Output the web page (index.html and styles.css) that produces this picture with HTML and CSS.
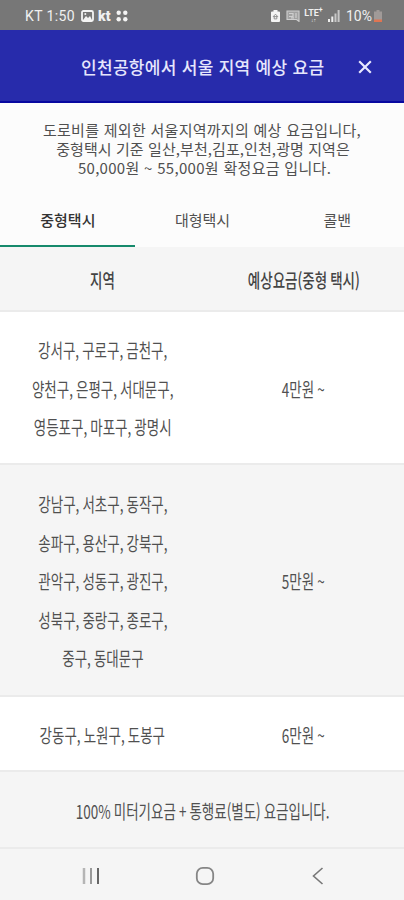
FILE: index.html
```html
<!DOCTYPE html>
<html lang="ko">
<head>
    <meta charset="UTF-8">
    <meta name="viewport" content="width=device-width, initial-scale=1.0">
    <title>예상 요금</title>
    <link rel="stylesheet" href="styles.css">
</head>
<body>
    <div class="status">
        <span class="clock">KT 1:50</span>
        <svg class="picture" width="13" height="12" viewBox="0 0 13 12">
            <rect x="1" y="1" width="11" height="10" rx="1.5" fill="none" stroke="#f4f4f4" stroke-width="1.8"/>
            <path d="M2 10 L5 6 L7 8 L9 6 L11 10Z" fill="#f4f4f4"/>
            <circle cx="4.3" cy="4" r="1" fill="#f4f4f4"/>
        </svg>
        <span class="kt">kt</span>
        <svg class="dots" width="12" height="12" viewBox="0 0 12 12" fill="#f4f4f4">
            <circle cx="2.7" cy="2.7" r="2.2"/>
            <circle cx="9.3" cy="2.7" r="2.2"/>
            <circle cx="2.7" cy="9.3" r="2.2"/>
            <circle cx="9.3" cy="9.3" r="2.2"/>
        </svg>
        <div class="right">
            <svg width="9" height="12" viewBox="0 0 9 12">
                <path d="M2.5 0h4v1.5H8a1 1 0 0 1 1 1V11a1 1 0 0 1-1 1H1a1 1 0 0 1-1-1V2.5a1 1 0 0 1 1-1h1.5z" fill="#f4f4f4"/>
                <path d="M4.5 4.2L2.2 6.6h4.6zM3.2 6.5v2.4h2.6V6.5" fill="none" stroke="#888" stroke-width="0.9"/>
            </svg>
            <svg width="14" height="12" viewBox="0 0 14 12" fill="none" stroke="#cfcfcf">
                <path d="M1 1h12v10.4L10.5 9.5H1z" fill="#a2a2a2" stroke-width="1.1"/>
                <path d="M3 3.5h4v3H3M10 3v5M5 7.8h3" stroke-width="1.2"/>
            </svg>
            <div class="lte"><b>LTE<sup>+</sup></b><i>↓↑</i></div>
            <svg class="signal" width="12" height="12" viewBox="0 0 12 12">
                <path d="M0 9h2v3H0zM3.3 6.5h2V12h-2z" fill="#eee"/>
                <path d="M6.5 3.5h2V12h-2zM9.6 0h2v12h-2z" fill="#c8c8c8"/>
            </svg>
            <span class="percent">10%</span>
            <svg class="battery" width="8" height="12" viewBox="0 0 8 12">
                <path d="M2.5 0h3v1.5H8V12H0V1.5h2.5z" fill="#a09a98"/>
                <path d="M0 9.5h8V12H0z" fill="#df7552"/>
            </svg>
        </div>
    </div>

    <div class="header">
        <h1>인천공항에서 서울 지역 예상 요금</h1>
        <svg class="close" width="14" height="14" viewBox="0 0 14 14">
            <path d="M1.2 1.2l11.6 11.6M12.8 1.2L1.2 12.8" stroke="#e9e9ff" stroke-width="2.2"/>
        </svg>
    </div>

    <div class="notice">
        <p class="line1">도로비를 제외한 서울지역까지의 예상 요금입니다,</p>
        <p class="line2">중형택시 기준 일산,부천,김포,인천,광명 지역은</p>
        <p class="line3">50,000원 ~ 55,000원 확정요금 입니다.</p>
    </div>

    <div class="tabs">
        <div class="tab active">중형택시</div>
        <div class="tab">대형택시</div>
        <div class="tab">콜밴</div>
    </div>

    <div class="row head">
        <div class="cell"><span>지역</span></div>
        <div class="cell"><span>예상요금(중형 택시)</span></div>
    </div>
    <div class="row white three">
        <div class="cell"><span>강서구, 구로구, 금천구,<br>양천구, 은평구, 서대문구,<br>영등포구, 마포구, 광명시</span></div>
        <div class="cell"><span>4만원 ~</span></div>
    </div>
    <div class="row five">
        <div class="cell"><span>강남구, 서초구, 동작구,<br>송파구, 용산구, 강북구,<br>관악구, 성동구, 광진구,<br>성북구, 중랑구, 종로구,<br>중구, 동대문구</span></div>
        <div class="cell"><span>5만원 ~</span></div>
    </div>
    <div class="row white one">
        <div class="cell"><span>강동구, 노원구, 도봉구</span></div>
        <div class="cell"><span>6만원 ~</span></div>
    </div>
    <div class="row total">
        <div class="cell"><span>100% 미터기요금 + 통행료(별도) 요금입니다.</span></div>
    </div>

    <div class="navbar">
        <svg width="18" height="18" viewBox="0 0 18 18" fill="none" stroke-width="2">
            <path d="M2 1v16" stroke="#b5b5b5" stroke-width="2.5"/>
            <path d="M9 1v16" stroke="#999"/>
            <path d="M16 1v16" stroke="#666"/>
        </svg>
        <svg width="20" height="20" viewBox="0 0 20 20">
            <rect x="1.8" y="1.8" width="16.4" height="16.4" rx="6" fill="none" stroke="#858585" stroke-width="1.8"/>
        </svg>
        <svg width="12" height="18" viewBox="0 0 12 18">
            <path d="M10.5 1L1.5 9l9 8" fill="none" stroke="#777" stroke-width="1.6"/>
        </svg>
    </div>
</body>
</html>
```

FILE: styles.css
```css
* {
    box-sizing: border-box;
}
body {
    margin: 0;
    width: 404px;
    height: 900px;
    overflow: hidden;
    background-color: #f5f5f5;
    font-family: "Noto Sans CJK KR", sans-serif;
    color: #505050;
}
.status {
    display: flex;
    align-items: center;
    height: 30px;
    padding: 1px 22px 0 25px;
    background-color: #777;
    color: #f0f0f0;
    font-family: Roboto, sans-serif;
}
.clock {
    width: 51px;
    font-size: 14px;
    letter-spacing: 0.4px;
    white-space: nowrap;
}
.picture {
    margin-left: 5px;
}
.kt {
    width: 14px;
    margin-left: 4px;
    font-size: 14px;
    font-weight: 900;
}
.dots {
    margin-left: 4px;
}
.right {
    display: flex;
    align-items: center;
    margin-left: auto;
}
.right svg {
    margin-right: 6px;
}
.lte {
    display: flex;
    flex-direction: column;
    align-items: center;
    width: 21px;
    margin-left: -3px;
    font-size: 9px;
    line-height: 9px;
}
.lte sup {
    font-size: 7px;
    line-height: 0;
}
.lte i {
    font-size: 5px;
    font-style: normal;
    line-height: 5px;
}
.right .signal {
    margin: 0 6px 0 4px;
}
.percent {
    width: 27px;
    font-size: 14px;
}
.right .battery {
    margin: 0 0 0 1px;
}
.header {
    display: flex;
    align-items: center;
    height: 73px;
    padding: 2px 0 0 81px;
    background-color: #272bab;
    border-bottom: 2px solid #0808a0;
}
.header h1 {
    width: 244px;
    margin: 0;
    font-size: 17px;
    font-weight: 500;
    letter-spacing: 0.3px;
    color: #e6e6fc;
    white-space: nowrap;
}
.close {
    margin-left: 33px;
}
.notice {
    height: 92px;
    padding-top: 17px;
    background-color: #fcfcfc;
    text-align: center;
    font-size: 15px;
    line-height: 19px;
}
.notice p {
    margin: 0;
    white-space: nowrap;
}
.line1 {
    letter-spacing: 0.28px;
}
.line2 {
    padding-left: 2px;
    letter-spacing: 0.08px;
}
.line3 {
    padding-left: 5px;
    letter-spacing: 0.3px;
}
.tabs {
    display: flex;
    height: 52px;
    background-color: #fcfcfc;
}
.tab {
    flex: 1;
    padding: 13px 0 0 1px;
    text-align: center;
    font-size: 15px;
    line-height: 24px;
}
.active {
    border-bottom: 2px solid #168a6c;
    color: #333;
    font-weight: 500;
}
.row {
    display: flex;
    align-items: center;
    padding-top: 3px;
    border-bottom: 2px solid #ebebeb;
    background-color: #f5f5f5;
}
.cell {
    flex: 1;
    padding-left: 2px;
    text-align: center;
    font-size: 19px;
    line-height: 38.5px;
    word-spacing: -1px;
}
/* narrow letters */
.cell span {
    display: inline-block;
    white-space: nowrap;
    transform: scaleX(0.71);
}
.cell + .cell {
    padding-left: 0;
}
.head {
    height: 65px;
    font-weight: 500;
    color: #444;
}
.white {
    background-color: #fff;
}
.three {
    height: 153px;
}
.five {
    height: 232px;
}
.one {
    height: 75px;
}
.total {
    height: 77px;
}
.navbar {
    display: flex;
    align-items: center;
    justify-content: space-between;
    height: 51px;
    padding: 3px 80px 0 82px;
}
.navbar svg:nth-child(2) {
    margin-right: 3px;
}
```
